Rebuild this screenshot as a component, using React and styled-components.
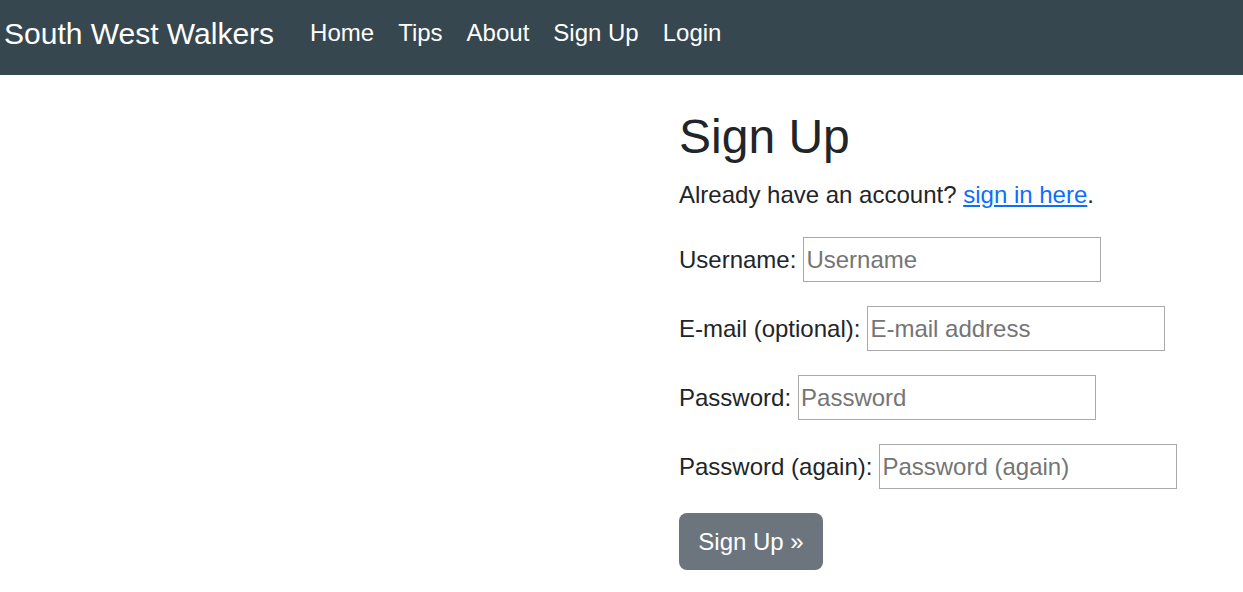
import React from "react";
import styled, { createGlobalStyle } from "styled-components";

const GlobalStyle = createGlobalStyle`
  body {
    margin: 0;
    font-family: "Liberation Sans", Arial, sans-serif;
    font-size: 24px;
    line-height: 1.5;
    color: #212529;
    background: #fff;
  }
  * {
    box-sizing: border-box;
  }
`;

const Navbar = styled.nav`
  display: flex;
  align-items: center;
  height: 75px;
  padding: 0 4px 9px;
  background: #37474f;
`;

const Brand = styled.a`
  font-size: 30px;
  line-height: 45px;
  color: #fff;
  text-decoration: none;
  margin-right: 24px;
`;

const NavList = styled.ul`
  display: flex;
  list-style: none;
  margin: 0;
  padding: 0;
`;

const NavLink = styled.a`
  display: block;
  padding: 0 12px;
  line-height: 36px;
  color: #fff;
  text-decoration: none;
`;

const Main = styled.main`
  display: grid;
  grid-template-columns: 679px 1fr;
  padding-top: 33px;
`;

const Content = styled.section`
  grid-column: 2;
`;

const Title = styled.h2`
  margin: 0 0 11px;
  font-size: 48px;
  font-weight: 400;
  line-height: 1.2;
`;

const Lead = styled.p`
  margin: 0 0 24px;
`;

const Link = styled.a`
  color: #0d6efd;
`;

const Form = styled.form`
  display: flex;
  flex-direction: column;
  align-items: flex-start;
  gap: 24px;
`;

const Row = styled.div`
  display: flex;
  align-items: center;
  gap: 7px;
  height: 45px;
`;

const Label = styled.label`
  line-height: 36px;
  padding-top: 2px;
`;

const Input = styled.input`
  width: 298px;
  height: 45px;
  padding: 2px 2px 0;
  border: 1px solid #a9a9a9;
  border-radius: 0;
  font-family: inherit;
  font-size: 24px;
  color: #212529;
  &::placeholder {
    color: #757575;
  }
`;

const Button = styled.button`
  width: 144px;
  height: 57px;
  padding: 1px 0 0;
  border: 0;
  border-radius: 8px;
  background: #6c757d;
  color: #fff;
  font-family: inherit;
  font-size: 24px;
  line-height: 36px;
  cursor: pointer;
`;

const fields = [
  { id: "username", label: "Username:", placeholder: "Username", type: "text" },
  { id: "email", label: "E-mail (optional):", placeholder: "E-mail address", type: "email" },
  { id: "password1", label: "Password:", placeholder: "Password", type: "password" },
  { id: "password2", label: "Password (again):", placeholder: "Password (again)", type: "password" },
];

export default function App() {
  return (
    <>
      <GlobalStyle />
      <Navbar>
        <Brand href="#">South West Walkers</Brand>
        <NavList>
          {["Home", "Tips", "About", "Sign Up", "Login"].map((item) => (
            <li key={item}>
              <NavLink href="#">{item}</NavLink>
            </li>
          ))}
        </NavList>
      </Navbar>
      <Main>
        <Content>
          <Title>Sign Up</Title>
          <Lead>
            Already have an account? <Link href="#">sign in here</Link>.
          </Lead>
          <Form onSubmit={(e) => e.preventDefault()}>
            {fields.map((f) => (
              <Row key={f.id}>
                <Label htmlFor={f.id}>{f.label}</Label>
                <Input id={f.id} type={f.type} placeholder={f.placeholder} />
              </Row>
            ))}
            <Button type="submit">Sign Up &raquo;</Button>
          </Form>
        </Content>
      </Main>
    </>
  );
}
